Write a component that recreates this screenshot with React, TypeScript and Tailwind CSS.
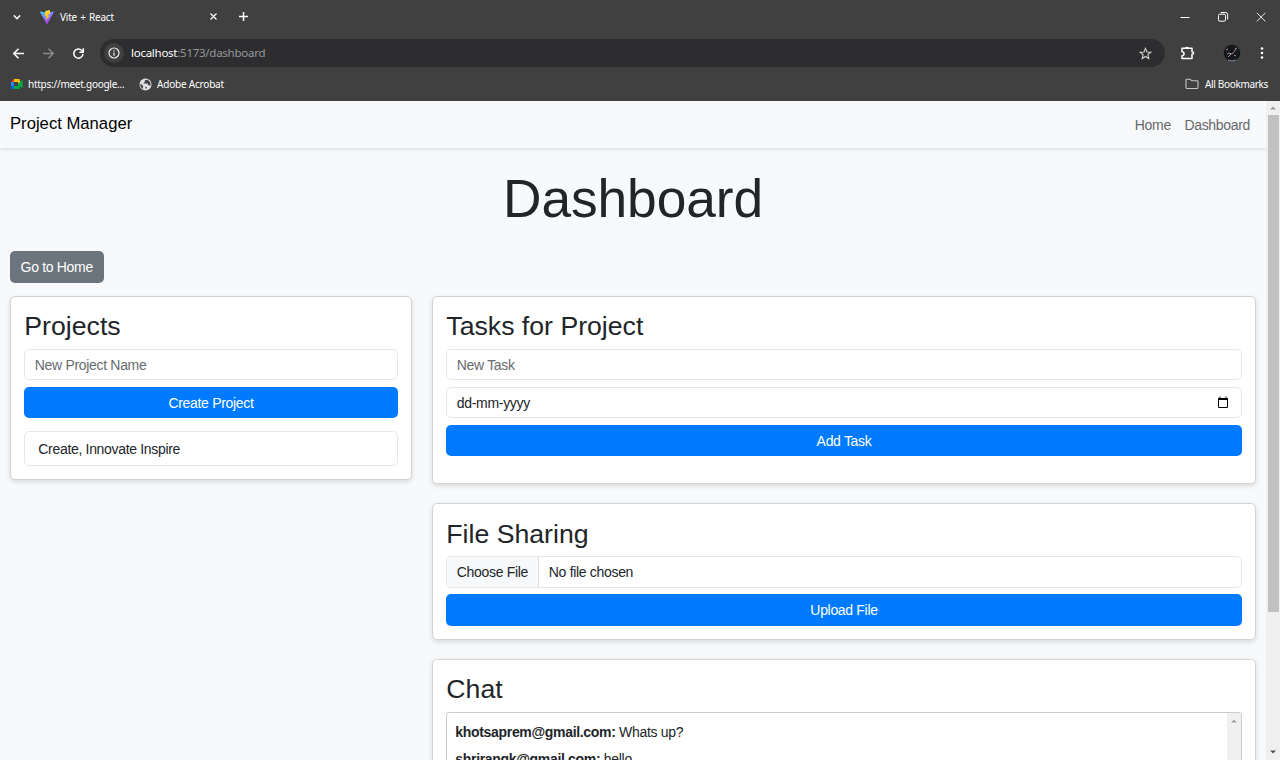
import type { ReactNode } from "react";

const uiFont = "font-['Noto_Sans',sans-serif]";

function Chrome() {
  return (
    <header className={`h-[101px] shrink-0 bg-[#404040] text-white ${uiFont}`}>
      <div className="flex h-[33px] items-center">
        <svg className="ml-[12px] size-[10px]" viewBox="0 0 10 10" fill="none" stroke="#f1f1f1" strokeWidth="1.5"><path d="M1.8 3.4 5 6.6 8.2 3.4" /></svg>
        <svg className="ml-[18px] h-[14px] w-[14px]" viewBox="0 0 32 32">
          <defs>
            <linearGradient id="v" x1="0" y1="0" x2="0.6" y2="1"><stop offset="0" stopColor="#41d1ff" /><stop offset="1" stopColor="#bd34fe" /></linearGradient>
            <linearGradient id="b" x1="0.4" y1="0" x2="0.6" y2="1"><stop offset="0" stopColor="#ffea83" /><stop offset="0.1" stopColor="#ffdd35" /><stop offset="1" stopColor="#ffa800" /></linearGradient>
          </defs>
          <path d="M31.5 5 17 31.2a1 1 0 0 1-1.8 0L.2 5a1 1 0 0 1 1-1.5L16 6.1l14.4-2.6A1 1 0 0 1 31.5 5Z" fill="url(#v)" />
          <path d="M22.8 0 12 2.1l-.7 11.4 3 .2-.8 4.3 1.8.2-1.4 6.6L22 12.8l-3.3.3 1.2-4.2 3.3.2Z" fill="url(#b)" />
        </svg>
        <span className="ml-[6px] w-[148px] text-[10px] tracking-[-0.2px] [word-spacing:0.8px] whitespace-nowrap">Vite + React</span>
        <svg className="ml-[1px] size-[9px]" viewBox="0 0 9 9" stroke="#fff" strokeWidth="1.2"><path d="M1.500 1.500l6 6M7.500 1.500l-6 6" /></svg>
        <svg className="ml-[20px] size-[11px]" viewBox="0 0 11 11" stroke="#fff" strokeWidth="1.5"><path d="M5.5 1v9M1 5.5h9" /></svg>
        <div className="ml-auto mr-[13px] flex items-center gap-[26px]">
          <svg className="size-[12px]" viewBox="0 0 12 12" stroke="#fff"><path d="M1.5 6.5h9" /></svg>
          <svg className="size-[12px]" viewBox="0 0 12 12" fill="none" stroke="#fff"><rect x="1.5" y="3.2" width="7" height="7" rx="1.3" /><path d="M3.6 1.5h5a2 2 0 0 1 2 2v5" /></svg>
          <svg className="size-[12px]" viewBox="0 0 12 12" stroke="#e4e4e4"><path d="M1.8 1.8l8.6 8.6M10.4 1.8l-8.6 8.6" /></svg>
        </div>
      </div>
      <div className="flex h-[40px] items-center">
        <svg className="ml-[12px] size-[13px]" viewBox="0 0 13 13" fill="none" stroke="#fff" strokeWidth="1.5"><path d="M12 6.500H1.800M6.500 1.700 1.700 6.500l4.800 4.800" /></svg>
        <svg className="ml-[17px] size-[13px]" viewBox="0 0 13 13" fill="none" stroke="#898989" strokeWidth="1.4"><path d="M1 6.500h10.200M6.500 1.700l4.800 4.800-4.800 4.800" /></svg>
        <svg className="ml-[17px] size-[13px]" viewBox="0 0 13 13" fill="none" stroke="#fff" strokeWidth="1.5"><path d="M11 7a4.600 4.600 0 1 1-1.200-3.600L11.200 5" /><path d="M11.300 1.300v3.900H7.400" /></svg>
        <div className="ml-[15px] flex h-[28px] w-[1065px] items-center rounded-full bg-[#2d2d30] pl-[4px] pr-[13px]">
          <div className="grid size-[20px] place-items-center rounded-full bg-[#404040]">
            <svg className="size-[12px]" viewBox="0 0 12 12" fill="none" stroke="#eee" strokeWidth="1.2"><circle cx="6" cy="6" r="5" /><path d="M6 5.400v3.300M6 3.200v1.200" /></svg>
          </div>
          <span className="ml-[7px] text-[11.5px] tracking-[-0.26px] text-white">localhost<span className="text-[#96969a]">:5173/dashboard</span></span>
          <svg className="ml-auto size-[13px]" viewBox="0 0 24 24" fill="none" stroke="#d4d4d4" strokeWidth="2"><path d="m12 2.500 2.700 6.600 7.100.500-5.400 4.600 1.700 7L12 17.400l-6.100 3.800 1.700-7-5.400-4.600 7.100-.500Z" /></svg>
        </div>
        <svg className="ml-[15px] size-[16px]" viewBox="0 0 16 16" fill="none" stroke="#fff" strokeWidth="1.5" strokeLinejoin="round"><path d="M2 3.300h10v3.500q1.500-.2 1.500 1.200T12 9.200V13.500H2v-2.800a2 2 0 0 0 0-4Z" /><path d="M5.400 2.800h3" strokeWidth="1.800" /></svg>
        <svg className="ml-[27px] size-[18px]" viewBox="0 0 18 18"><circle cx="9" cy="9" r="8.300" fill="#16161d" /><path d="M3 6l2-1M4 10l2-1 3 1 4-5M12 5l2-1M5 13l3-3M11 11l2 1" stroke="#aa9791" strokeWidth="1" /><path d="M5 16q4 2 8 0" stroke="#7e8fa6" fill="none" /></svg>
        <svg className="ml-[14px] size-[14px]" viewBox="0 0 14 14" fill="#fff"><circle cx="7" cy="2.500" r="1.300" /><circle cx="7" cy="7" r="1.300" /><circle cx="7" cy="11.500" r="1.300" /></svg>
      </div>
      <div className="flex h-[22px] items-center text-[10px] whitespace-nowrap">
        <svg className="ml-[10px] h-[12px] w-[13px]" viewBox="0 0 13 12"><path d="M1 4 4 1v3Z" fill="#ea4335" /><path d="M4 1h5q1 0 1 1v3L8 6V4H4Z" fill="#fbbc04" /><path d="M1 4h3v4H1Z" fill="#2684fc" /><path d="M1 8h3v3H2q-1 0-1-1Z" fill="#0066da" /><path d="M4 8h4V6l4-4q.600-.300.600.400v7.200q0 .700-.600.400L10 8v2q0 1-1 1H4Z" fill="#00ac47" /><path d="M4 4h4v4H4Z" fill="#404040" /></svg>
        <span className="ml-[5px] w-[98px] tracking-[-0.26px]">https://meet.google...</span>
        <svg className="ml-[13px] size-[13px]" viewBox="0 0 13 13"><circle cx="6.500" cy="6.500" r="6" fill="#dfe1e5" /><path d="M1.300 5.500 4 7.800v3.100Q1 9.500 1.300 5.500ZM8.200 1.700q-3 0-2.500 2.200L4.300 5.500h4l1.400 2h1.800Q12 3.500 8.200 1.700ZM6 8.500l2 .8-1 2Z" fill="#404040" /></svg>
        <span className="ml-[5px] tracking-[-0.2px]">Adobe Acrobat</span>
        <svg className="ml-auto mr-[6px] h-[12px] w-[14px]" viewBox="0 0 14 12" fill="none" stroke="#c8c8c8" strokeWidth="1.100"><path d="M1.800 1.200h3.400L6.700 2.800h5.500q.800 0 .800.800v6q0 .900-.800.900H1.800Q1 10.500 1 9.600V2q0-.800.800-.800Z" /></svg>
        <span className="mr-[12px] tracking-[-0.33px]">All Bookmarks</span>
      </div>
    </header>
  );
}

function Card({ title, children }: { title: string; children: ReactNode }) {
  return (
    <section className="rounded-[5px] border border-[#d2d4d6] bg-white p-[13.330px] shadow-[0_2px_5px_rgba(0,0,0,0.13)]">
      <h2 className="mb-[6.670px] text-[26.670px] leading-[32px] tracking-normal">{title}</h2>
      {children}
    </section>
  );
}

function Field({ children }: { children: ReactNode }) {
  return <div className="mb-[6.600px] flex h-[31.400px] items-center rounded-[5px] border border-[#e6e8eb] bg-white px-[9.500px]">{children}</div>;
}

function Primary({ children }: { children: ReactNode }) {
  return <button className="block h-[31.400px] w-full rounded-[5px] bg-[#007bff] text-white">{children}</button>;
}

export default function App() {
  return (
    <div className="flex h-[760px] w-[1280px] flex-col overflow-hidden bg-[#f8f9fb] font-['Liberation_Sans',Arial,sans-serif] text-[14px] leading-[20px] tracking-[-0.32px] text-[#212529]">
      <Chrome />
      <div className="flex min-h-0 flex-1">
        <main className="w-[1266px] shrink-0 overflow-hidden">
          <nav className="flex h-[47px] items-center pr-[16px] pl-[10px] shadow-[0_1px_4px_rgba(0,0,0,0.14)]">
            <span className="pb-px text-[16.670px] tracking-normal text-black">Project Manager</span>
            <div className="ml-auto flex gap-[13.500px] text-[#66686a]"><a>Home</a><a>Dashboard</a></div>
          </nav>
          <div className="px-[10px] pt-[19px]">
            <h1 className="text-center text-[53.330px] leading-[64px] tracking-[-0.1px]">Dashboard</h1>
            <button className="mt-[20.300px] block h-[31.400px] w-[93.500px] rounded-[5px] bg-[#6c757d] text-white">Go to Home</button>
            <div className="mt-[13.200px] grid grid-cols-[402px_824px] items-start gap-[20px]">
              <Card title="Projects">
                <Field><span className="text-[#686b70]">New Project Name</span></Field>
                <Primary>Create Project</Primary>
                <div className="mt-[13.100px] flex h-[34.600px] items-center rounded-[5px] border border-[#e6e8eb] px-[13px]">Create, Innovate Inspire</div>
              </Card>
              <div className="flex flex-col gap-[19.300px]">
                <Card title="Tasks for Project">
                  <Field><span className="text-[#686b70]">New Task</span></Field>
                  <Field>
                    <span>dd-mm-yyyy</span>
                    <svg className="mr-[2.500px] mb-px ml-auto h-[12px] w-[12px]" viewBox="0 0 12 12" fill="none" stroke="#000"><path d="M1.500 2.500h9v9h-9Z" /><path d="M1 3h10" strokeWidth="2" /><path d="M3 .500v2M9 .500v2" /></svg>
                  </Field>
                  <Primary>Add Task</Primary>
                  <div className="h-[13.330px]" />
                </Card>
                <Card title="File Sharing">
                  <Field>
                    <span className="-ml-[9.500px] flex h-full w-[92px] items-center rounded-l-[4px] border-r border-[#dee2e6] bg-[#f8f9fa] pl-[9.500px]">Choose File</span>
                    <span className="ml-[9.500px]">No file chosen</span>
                  </Field>
                  <Primary>Upload File</Primary>
                </Card>
                <Card title="Chat">
                  <div className="flex h-[250px] justify-between rounded-[3px] border border-[#ccc]">
                    <div className="pt-[9px] pl-[8px]">
                      <p className="mb-[6.670px]"><b>khotsaprem@gmail.com:</b> Whats up?</p>
                      <p><b>shrirangk@gmail.com:</b> hello</p>
                    </div>
                    <div className="flex w-[14px] justify-center bg-[#f0f0f0] pt-[6px]"><svg className="h-[4px] w-[6px]" viewBox="0 0 6 4" fill="#a3a3a3"><path d="M0 3.500 3 .500l3 3Z" /></svg></div>
                  </div>
                </Card>
              </div>
            </div>
          </div>
        </main>
        <aside className="flex w-[14px] flex-col items-center bg-[#f0f0f0]">
          <svg className="mt-[5px] h-[4px] w-[6px] shrink-0" viewBox="0 0 6 4" fill="#9d9d9d"><path d="M0 3.500 3 .500l3 3Z" /></svg>
          <div className="mt-[5px] ml-px h-[497px] w-[11px] shrink-0 bg-[#c1c1c1]" />
          <svg className="mt-auto mb-[6px] h-[4px] w-[6px] shrink-0" viewBox="0 0 6 4" fill="#505050"><path d="M0 .500 3 3.500l3-3Z" /></svg>
        </aside>
      </div>
    </div>
  );
}
